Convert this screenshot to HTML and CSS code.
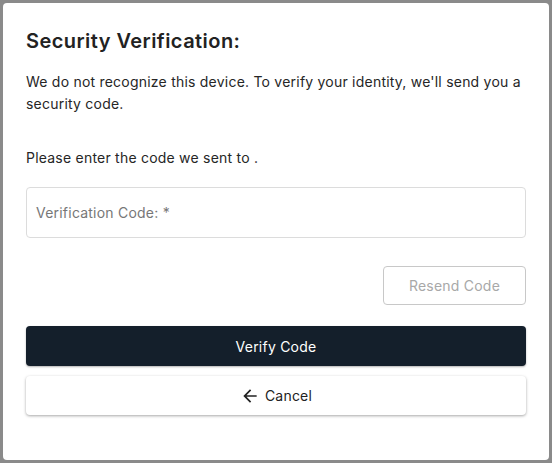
FILE: index.html
```
<!DOCTYPE html>
<html>
<head>
<meta charset="utf-8">
<link rel="stylesheet" href="styles.css">
</head>
<body>
<div class="page">
  <div class="dialog">
    <h2 class="title">Security Verification:</h2>
    <p class="intro">We do not recognize this device. To verify your identity, we'll send you a security code.</p>
    <p class="prompt">Please enter the code we sent to .</p>
    <div class="field"><span class="placeholder">Verification Code: *</span></div>
    <div class="resend-row"><button class="btn-resend">Resend Code</button></div>
    <button class="btn-verify">Verify Code</button>
    <button class="btn-cancel"><svg class="arrow" width="20" height="20" viewBox="0 0 24 24"><path d="M20 11H7.83l5.59-5.59L12 4l-8 8 8 8 1.41-1.41L7.83 13H20v-2z" fill="#222"/></svg><span>Cancel</span></button>
  </div>
</div>
</body>
</html>
```
FILE: styles.css
```
* { box-sizing: border-box; }
html, body { margin: 0; padding: 0; }
body {
  width: 552px;
  height: 463px;
  background: #8a8a8a;
  font-family: Inter, "Open Sans", sans-serif;
  color: #222;
  overflow: hidden;
}
.page {
  padding: 3px 3px 3px 3px;
}
.dialog {
  width: 546px;
  height: 457px;
  background: #fff;
  border-radius: 4px;
  padding: 26px 23px 0 23px;
  display: flex;
  flex-direction: column;
  letter-spacing: 0.22px;
}
.title {
  margin: 0;
  font-size: 20px;
  font-weight: 600;
  line-height: 24px;
  color: #222;
  letter-spacing: 0.45px;
}
.intro {
  margin: 18px 0 0 0;
  font-size: 14px;
  line-height: 22px;
  color: #262626;
}
.prompt {
  margin: 32px 0 0 0;
  font-size: 14px;
  line-height: 22px;
  color: #262626;
}
.field {
  margin-top: 18px;
  height: 51px;
  border: 1px solid #dcdcdc;
  border-radius: 4px;
  display: flex;
  align-items: center;
  padding-left: 9px;
}
.placeholder {
  font-size: 14px;
  color: #777;
}
.resend-row {
  display: flex;
  justify-content: flex-end;
  margin-top: 28px;
}
button {
  font-family: inherit;
  letter-spacing: inherit;
  cursor: pointer;
}
.btn-resend {
  width: 143px;
  height: 39px;
  background: #fff;
  border: 1px solid #c8c8c8;
  border-radius: 4px;
  font-size: 14px;
  color: #a8a8a8;
}
.btn-verify {
  margin-top: 21px;
  width: 100%;
  height: 40px;
  background: #141f2b;
  color: #fff;
  border: none;
  border-radius: 4px;
  font-size: 14px;
  box-shadow: 0 1px 2px rgba(0,0,0,0.3);
}
.btn-cancel {
  margin-top: 10px;
  width: 100%;
  height: 39px;
  background: #fff;
  color: #222;
  border: none;
  border-radius: 4px;
  font-size: 14px;
  box-shadow: 0 1px 3px rgba(0,0,0,0.35);
  display: flex;
  align-items: center;
  justify-content: center;
  gap: 5px;
}
.arrow { display: block; }
```
